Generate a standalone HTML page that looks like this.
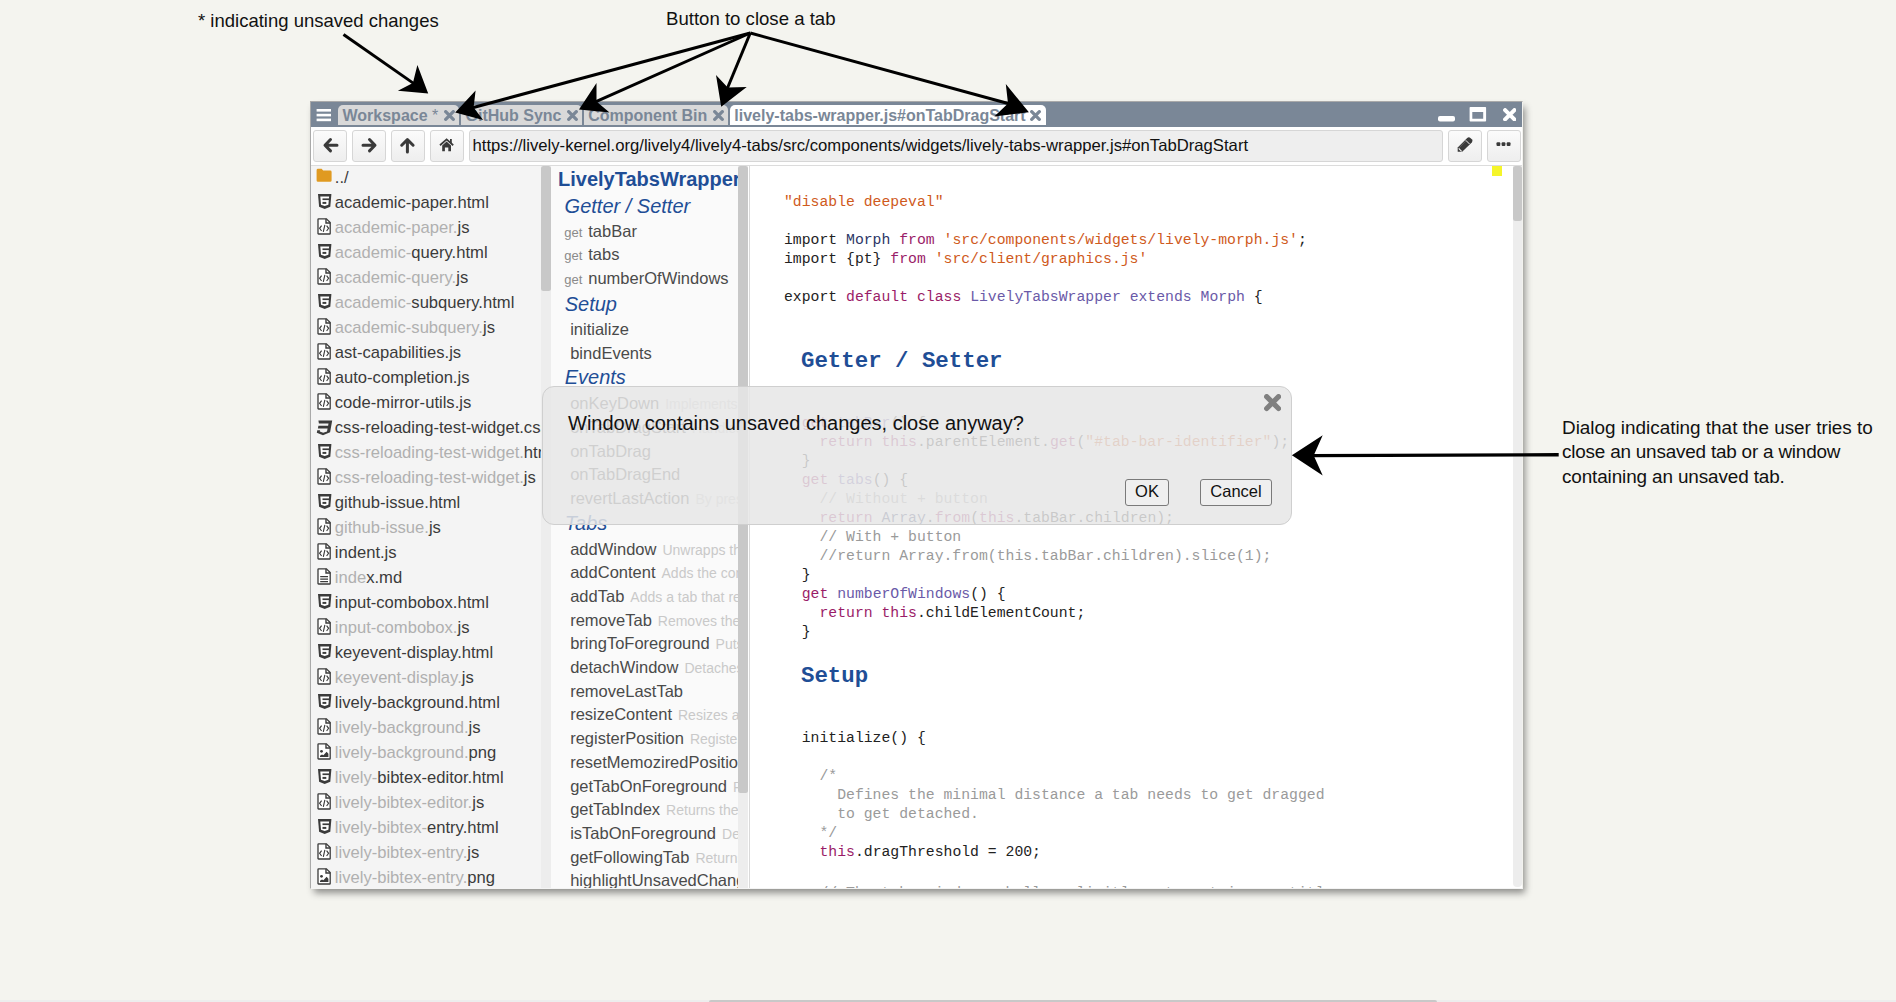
<!DOCTYPE html><html><head><meta charset="utf-8"><style>
*{box-sizing:border-box;margin:0;padding:0}
html,body{width:1896px;height:1002px;overflow:hidden;background:#f4f4ef;font-family:"Liberation Sans",sans-serif;position:relative}
.abs{position:absolute}
.ann{position:absolute;color:#111;font-size:18.6px;white-space:nowrap;line-height:24px}
#win{position:absolute;left:310px;top:101px;width:1213px;height:788px;background:#fff;border:1px solid #a9a9a9;border-right-color:#f2f2ee;border-bottom-color:#f4f4f4;box-shadow:3px 5px 7px -1px rgba(0,0,0,0.42)}
#title{position:absolute;left:311px;top:102px;width:1211px;height:25px;background:#7a8797}
.tab{position:absolute;top:104.7px;height:20.3px;background:#d9d9d9;border-radius:5px 5px 0 0;color:#7a8797;font-weight:bold;font-size:16px;white-space:nowrap;line-height:20px}
.tab.act{background:#fff}
.tab span{position:absolute;top:1px}
.btn{position:absolute;top:130px;width:33.6px;height:32px;border:1px solid #d6d6d6;border-radius:3px;background:linear-gradient(#fbfbfb,#eeeeee)}
#url{position:absolute;left:469px;top:130px;width:974px;height:31.6px;border:1px solid #d6d6d6;border-radius:3px;background:#eeeeee;font-size:16.68px;color:#111;line-height:30px;padding-left:2.5px;white-space:nowrap;overflow:hidden}
#sep{position:absolute;left:311px;top:165px;width:1211px;height:1px;background:#dcdcdc}
#files{position:absolute;left:311px;top:166px;width:230px;height:722px;background:#f4f4f4;overflow:hidden}
.frow{position:absolute;left:0;height:25px;white-space:nowrap;font-size:16.6px;color:#3b3b3b}
.frow .t{position:absolute;left:23.8px;top:0;line-height:25px}
.frow .g{color:#b0b0b0}
.frow svg{position:absolute;left:6px;top:3px}
.track{position:absolute;background:#ededed}
.thumb{position:absolute;background:#c8c8c8;border-radius:2.5px}
#outline{position:absolute;left:551px;top:166px;width:187px;height:722px;background:#fafafa;overflow:hidden}
.orow{position:absolute;white-space:nowrap;font-size:16.5px;color:#4a4a4a}
.orow .d{color:#c9c9c9;font-size:14px;margin-left:6px}
.hd{color:#1f4e96;font-style:italic;font-size:20px}
.get{color:#8a8a8a;font-size:13px;margin-right:6px}
#divider{position:absolute;left:747.5px;top:166px;width:2.5px;height:722px;background:#fff;border-right:1px solid #d9d9d9}
#code{position:absolute;left:750px;top:166px;width:763px;height:722px;background:#fff;overflow:hidden}
.cl{position:absolute;left:34px;white-space:pre;font-family:"Liberation Mono",monospace;font-size:14.78px;line-height:19px;color:#222}
.ch{position:absolute;left:51px;white-space:pre;font-family:"Liberation Mono",monospace;font-weight:bold;font-size:22.4px;line-height:30px;color:#1f4e96}
.s{color:#cf5a1c}.k{color:#9a1c68}.df{color:#6a5aa8}.c{color:#9a9a9a}.v2{color:#2b3566}
#dialog{position:absolute;left:542px;top:386px;width:750px;height:139px;border:1px solid #cfcfcf;border-radius:12px;background:rgba(230,230,230,0.85)}
#dialog .msg{position:absolute;left:25px;top:25px;font-size:20px;color:#111;white-space:nowrap}
.dbtn{position:absolute;top:91.5px;height:27.5px;border:1px solid #7a7a7a;border-radius:3px;background:#efefef;font-size:16.5px;color:#111;text-align:center;line-height:23px}
#hs{position:absolute;left:0;top:1000px;width:1896px;height:2px;background:#ededed}
#hs div{position:absolute;left:709px;top:0;width:728px;height:4px;background:#c8c8c8;border-radius:3px}
</style></head><body>
<div class="ann" style="left:198px;top:9px;font-size:18.5px">* indicating unsaved changes</div>
<div class="ann" style="left:666px;top:7px;font-size:18.6px">Button to close a tab</div>
<div class="ann" style="left:1562px;top:416px;font-size:18.9px;line-height:24.4px">Dialog indicating that the user tries to<br><span style="letter-spacing:-0.2px">close an unsaved tab or a window</span><br><span style="letter-spacing:-0.12px">containing an unsaved tab.</span></div>
<div id="win"></div>
<div id="title"></div>
<svg class="abs" style="left:316px;top:108px" width="16" height="14"><rect x="0.6" y="1" width="14.4" height="2.6" fill="#fff"/><rect x="0.6" y="5.8" width="14.4" height="2.6" fill="#fff"/><rect x="0.6" y="10.6" width="14.4" height="2.6" fill="#fff"/></svg>
<div class="tab" style="left:338px;width:121px"><span style="left:4.5px">Workspace <b style="font-weight:normal">*</b></span></div>
<svg class="abs" style="left:443.5px;top:110.2px" width="11" height="11" viewBox="0 0 10 10"><path d="M1.55 1.55L8.45 8.45M8.45 1.55L1.55 8.45" stroke="#7a8797" stroke-width="3.0" stroke-linecap="round"/></svg>
<div class="tab" style="left:461px;width:121px"><span style="left:4.5px">GitHub Sync</span></div>
<svg class="abs" style="left:566.5px;top:110.2px" width="11" height="11" viewBox="0 0 10 10"><path d="M1.55 1.55L8.45 8.45M8.45 1.55L1.55 8.45" stroke="#7a8797" stroke-width="3.0" stroke-linecap="round"/></svg>
<div class="tab" style="left:583.7px;width:144.5px"><span style="left:4.5px">Component Bin</span></div>
<svg class="abs" style="left:712.7px;top:110.2px" width="11" height="11" viewBox="0 0 10 10"><path d="M1.55 1.55L8.45 8.45M8.45 1.55L1.55 8.45" stroke="#7a8797" stroke-width="3.0" stroke-linecap="round"/></svg>
<div class="tab act" style="left:729.8px;width:315.79999999999995px"><span style="left:4.5px">lively-tabs-wrapper.js#onTabDragStart</span></div>
<svg class="abs" style="left:1030.1px;top:110.2px" width="11" height="11" viewBox="0 0 10 10"><path d="M1.55 1.55L8.45 8.45M8.45 1.55L1.55 8.45" stroke="#7a8797" stroke-width="3.0" stroke-linecap="round"/></svg>
<svg class="abs" style="left:1436px;top:104px" width="84" height="20"><rect x="2" y="12" width="17" height="5.4" rx="2" fill="#fff"/><path d="M34.4 3H49.3Q50.1 3 50.1 3.8V16.7Q50.1 17.5 49.3 17.5H34.4Q33.6 17.5 33.6 16.7V3.8Q33.6 3 34.4 3ZM36.3 8V14.8H47.2V8Z" fill="#fff" fill-rule="evenodd"/></svg>
<svg class="abs" style="left:1502.5px;top:107.5px" width="13.5" height="13.5" viewBox="0 0 10 10"><path d="M1.55 1.55L8.45 8.45M8.45 1.55L1.55 8.45" stroke="#fff" stroke-width="3.0" stroke-linecap="round"/></svg>
<div class="btn" style="left:313.4px"></div>
<div class="btn" style="left:352.4px"></div>
<div class="btn" style="left:391.2px"></div>
<div class="btn" style="left:430.3px"></div>
<svg class="abs" style="left:322px;top:137px" width="17" height="17"><path d="M8.5 2.5L3 8.2L8.5 13.9M3.5 8.2H15" stroke="#3a3a3a" stroke-width="3" fill="none" stroke-linecap="round" stroke-linejoin="round"/></svg>
<svg class="abs" style="left:361px;top:137px" width="17" height="17"><path d="M8.5 2.5L14 8.2L8.5 13.9M2 8.2H13.5" stroke="#3a3a3a" stroke-width="3" fill="none" stroke-linecap="round" stroke-linejoin="round"/></svg>
<svg class="abs" style="left:399px;top:137px" width="17" height="17"><path d="M2.7 8.2L8.4 2.6L14.1 8.2M8.4 3.2V15" stroke="#3a3a3a" stroke-width="3" fill="none" stroke-linecap="round" stroke-linejoin="round"/></svg>
<svg class="abs" style="left:439px;top:138px" width="17" height="15"><path d="M1 7.2L7.6 1.4L14.2 7.2" stroke="#3a3a3a" stroke-width="1.8" fill="none"/><path d="M3.2 7.4L7.6 3.6L12 7.4V13.2H9.3V9.6H5.9V13.2H3.2Z" fill="#3a3a3a"/><rect x="11" y="1" width="1.8" height="4" fill="#3a3a3a"/></svg>
<div id="url">https://lively-kernel.org/lively4/lively4-tabs/src/components/widgets/lively-tabs-wrapper.js#onTabDragStart</div>
<div class="btn" style="left:1448.3px"></div><div class="btn" style="left:1487.3px"></div>
<svg class="abs" style="left:1452px;top:132px" width="26" height="24"><path d="M5.7 19.8L5.7 15.6L15.2 5.9Q16.8 4.4 18.4 5.9L19.8 7.3Q21.3 8.9 19.8 10.4L10.2 19.8Z" fill="#3a3a3a"/><path d="M13.8 8.3L17.6 12.1" stroke="#f6f6f6" stroke-width="1"/><path d="M6.7 16.4L9.6 19.3" stroke="#f6f6f6" stroke-width="1.1"/><path d="M7.2 15.6L14.2 8.6" stroke="#8a8a8a" stroke-width="0.5"/></svg>
<svg class="abs" style="left:1496px;top:140px" width="16" height="10"><rect x="0.5" y="2.2" width="3.8" height="3.8" rx="1" fill="#3a3a3a"/><rect x="5.6" y="2.2" width="3.8" height="3.8" rx="1" fill="#3a3a3a"/><rect x="10.7" y="2.2" width="3.8" height="3.8" rx="1" fill="#3a3a3a"/></svg>
<div id="sep"></div>
<div id="files">
<div class="frow" style="top:-1.5px;width:230px"><svg width="17" height="15" style="left:5px;top:3.5px"><path d="M0.6 2.2Q0.6 0.8 2 0.8H5.6L7.2 2.6H14.2Q15.6 2.6 15.6 4V12.4Q15.6 13.8 14.2 13.8H2Q0.6 13.8 0.6 12.4Z" fill="#e09a21"/></svg><span class="t">../</span></div>
<div class="frow" style="top:23.5px;width:230px"><svg width="15" height="16" style="left:6.5px;top:4.9px"><path d="M0 0H13.4L12.3 12.7L6.7 14.9L1.1 12.7Z" fill="#3b3b3b"/><path d="M2.3 2.4H11.1L10.4 10.8L6.7 12L3 10.8Z" fill="#fff"/><path d="M4.5 4.4H11.4V6.1H4.5Z" fill="#3b3b3b"/><path d="M4.5 7.9H8.3V9.9H4.5Z" fill="#3b3b3b"/></svg><span class="t">academic-paper.html</span></div>
<div class="frow" style="top:48.5px;width:230px"><svg width="15" height="18" style="left:6px;top:3.3px"><path d="M1 1.4Q1 0.8 1.6 0.8H9.4L13.2 4.6V15.4Q13.2 16 12.6 16H1.6Q1 16 1 15.4Z" fill="#fff" stroke="#3b3b3b" stroke-width="1.3"/><path d="M9 0.8V5H13.2" fill="none" stroke="#3b3b3b" stroke-width="1.4"/><path d="M4.6 7.6L2.6 10.3L4.6 13M9.6 7.6L11.6 10.3L9.6 13M7.9 6.8L6.3 13.8" stroke="#3b3b3b" stroke-width="1.15" fill="none"/></svg><span class="t"><span class="g">academic-paper.</span>js</span></div>
<div class="frow" style="top:73.5px;width:230px"><svg width="15" height="16" style="left:6.5px;top:4.9px"><path d="M0 0H13.4L12.3 12.7L6.7 14.9L1.1 12.7Z" fill="#3b3b3b"/><path d="M2.3 2.4H11.1L10.4 10.8L6.7 12L3 10.8Z" fill="#fff"/><path d="M4.5 4.4H11.4V6.1H4.5Z" fill="#3b3b3b"/><path d="M4.5 7.9H8.3V9.9H4.5Z" fill="#3b3b3b"/></svg><span class="t"><span class="g">academic-</span>query.html</span></div>
<div class="frow" style="top:98.5px;width:230px"><svg width="15" height="18" style="left:6px;top:3.3px"><path d="M1 1.4Q1 0.8 1.6 0.8H9.4L13.2 4.6V15.4Q13.2 16 12.6 16H1.6Q1 16 1 15.4Z" fill="#fff" stroke="#3b3b3b" stroke-width="1.3"/><path d="M9 0.8V5H13.2" fill="none" stroke="#3b3b3b" stroke-width="1.4"/><path d="M4.6 7.6L2.6 10.3L4.6 13M9.6 7.6L11.6 10.3L9.6 13M7.9 6.8L6.3 13.8" stroke="#3b3b3b" stroke-width="1.15" fill="none"/></svg><span class="t"><span class="g">academic-query.</span>js</span></div>
<div class="frow" style="top:123.5px;width:230px"><svg width="15" height="16" style="left:6.5px;top:4.9px"><path d="M0 0H13.4L12.3 12.7L6.7 14.9L1.1 12.7Z" fill="#3b3b3b"/><path d="M2.3 2.4H11.1L10.4 10.8L6.7 12L3 10.8Z" fill="#fff"/><path d="M4.5 4.4H11.4V6.1H4.5Z" fill="#3b3b3b"/><path d="M4.5 7.9H8.3V9.9H4.5Z" fill="#3b3b3b"/></svg><span class="t"><span class="g">academic-</span>subquery.html</span></div>
<div class="frow" style="top:148.5px;width:230px"><svg width="15" height="18" style="left:6px;top:3.3px"><path d="M1 1.4Q1 0.8 1.6 0.8H9.4L13.2 4.6V15.4Q13.2 16 12.6 16H1.6Q1 16 1 15.4Z" fill="#fff" stroke="#3b3b3b" stroke-width="1.3"/><path d="M9 0.8V5H13.2" fill="none" stroke="#3b3b3b" stroke-width="1.4"/><path d="M4.6 7.6L2.6 10.3L4.6 13M9.6 7.6L11.6 10.3L9.6 13M7.9 6.8L6.3 13.8" stroke="#3b3b3b" stroke-width="1.15" fill="none"/></svg><span class="t"><span class="g">academic-subquery.</span>js</span></div>
<div class="frow" style="top:173.5px;width:230px"><svg width="15" height="18" style="left:6px;top:3.3px"><path d="M1 1.4Q1 0.8 1.6 0.8H9.4L13.2 4.6V15.4Q13.2 16 12.6 16H1.6Q1 16 1 15.4Z" fill="#fff" stroke="#3b3b3b" stroke-width="1.3"/><path d="M9 0.8V5H13.2" fill="none" stroke="#3b3b3b" stroke-width="1.4"/><path d="M4.6 7.6L2.6 10.3L4.6 13M9.6 7.6L11.6 10.3L9.6 13M7.9 6.8L6.3 13.8" stroke="#3b3b3b" stroke-width="1.15" fill="none"/></svg><span class="t">ast-capabilities.js</span></div>
<div class="frow" style="top:198.5px;width:230px"><svg width="15" height="18" style="left:6px;top:3.3px"><path d="M1 1.4Q1 0.8 1.6 0.8H9.4L13.2 4.6V15.4Q13.2 16 12.6 16H1.6Q1 16 1 15.4Z" fill="#fff" stroke="#3b3b3b" stroke-width="1.3"/><path d="M9 0.8V5H13.2" fill="none" stroke="#3b3b3b" stroke-width="1.4"/><path d="M4.6 7.6L2.6 10.3L4.6 13M9.6 7.6L11.6 10.3L9.6 13M7.9 6.8L6.3 13.8" stroke="#3b3b3b" stroke-width="1.15" fill="none"/></svg><span class="t">auto-completion.js</span></div>
<div class="frow" style="top:223.5px;width:230px"><svg width="15" height="18" style="left:6px;top:3.3px"><path d="M1 1.4Q1 0.8 1.6 0.8H9.4L13.2 4.6V15.4Q13.2 16 12.6 16H1.6Q1 16 1 15.4Z" fill="#fff" stroke="#3b3b3b" stroke-width="1.3"/><path d="M9 0.8V5H13.2" fill="none" stroke="#3b3b3b" stroke-width="1.4"/><path d="M4.6 7.6L2.6 10.3L4.6 13M9.6 7.6L11.6 10.3L9.6 13M7.9 6.8L6.3 13.8" stroke="#3b3b3b" stroke-width="1.15" fill="none"/></svg><span class="t">code-mirror-utils.js</span></div>
<div class="frow" style="top:248.5px;width:230px"><svg width="18" height="17" style="left:4.6px;top:5.2px"><path d="M2.4 0.4H16.2L14.1 12.2L7 15.2L0.8 12.8L1.3 10.2H4.1L3.8 11.4L7.2 12.7L11 11.4L11.6 8.5H1.9L2.4 5.7H12.1L12.5 3.4H2.9Z" fill="#3b3b3b"/></svg><span class="t">css-reloading-test-widget.css</span></div>
<div class="frow" style="top:273.5px;width:230px"><svg width="15" height="16" style="left:6.5px;top:4.9px"><path d="M0 0H13.4L12.3 12.7L6.7 14.9L1.1 12.7Z" fill="#3b3b3b"/><path d="M2.3 2.4H11.1L10.4 10.8L6.7 12L3 10.8Z" fill="#fff"/><path d="M4.5 4.4H11.4V6.1H4.5Z" fill="#3b3b3b"/><path d="M4.5 7.9H8.3V9.9H4.5Z" fill="#3b3b3b"/></svg><span class="t"><span class="g">css-reloading-test-widget.</span>html</span></div>
<div class="frow" style="top:298.5px;width:230px"><svg width="15" height="18" style="left:6px;top:3.3px"><path d="M1 1.4Q1 0.8 1.6 0.8H9.4L13.2 4.6V15.4Q13.2 16 12.6 16H1.6Q1 16 1 15.4Z" fill="#fff" stroke="#3b3b3b" stroke-width="1.3"/><path d="M9 0.8V5H13.2" fill="none" stroke="#3b3b3b" stroke-width="1.4"/><path d="M4.6 7.6L2.6 10.3L4.6 13M9.6 7.6L11.6 10.3L9.6 13M7.9 6.8L6.3 13.8" stroke="#3b3b3b" stroke-width="1.15" fill="none"/></svg><span class="t"><span class="g">css-reloading-test-widget.</span>js</span></div>
<div class="frow" style="top:323.5px;width:230px"><svg width="15" height="16" style="left:6.5px;top:4.9px"><path d="M0 0H13.4L12.3 12.7L6.7 14.9L1.1 12.7Z" fill="#3b3b3b"/><path d="M2.3 2.4H11.1L10.4 10.8L6.7 12L3 10.8Z" fill="#fff"/><path d="M4.5 4.4H11.4V6.1H4.5Z" fill="#3b3b3b"/><path d="M4.5 7.9H8.3V9.9H4.5Z" fill="#3b3b3b"/></svg><span class="t">github-issue.html</span></div>
<div class="frow" style="top:348.5px;width:230px"><svg width="15" height="18" style="left:6px;top:3.3px"><path d="M1 1.4Q1 0.8 1.6 0.8H9.4L13.2 4.6V15.4Q13.2 16 12.6 16H1.6Q1 16 1 15.4Z" fill="#fff" stroke="#3b3b3b" stroke-width="1.3"/><path d="M9 0.8V5H13.2" fill="none" stroke="#3b3b3b" stroke-width="1.4"/><path d="M4.6 7.6L2.6 10.3L4.6 13M9.6 7.6L11.6 10.3L9.6 13M7.9 6.8L6.3 13.8" stroke="#3b3b3b" stroke-width="1.15" fill="none"/></svg><span class="t"><span class="g">github-issue.</span>js</span></div>
<div class="frow" style="top:373.5px;width:230px"><svg width="15" height="18" style="left:6px;top:3.3px"><path d="M1 1.4Q1 0.8 1.6 0.8H9.4L13.2 4.6V15.4Q13.2 16 12.6 16H1.6Q1 16 1 15.4Z" fill="#fff" stroke="#3b3b3b" stroke-width="1.3"/><path d="M9 0.8V5H13.2" fill="none" stroke="#3b3b3b" stroke-width="1.4"/><path d="M4.6 7.6L2.6 10.3L4.6 13M9.6 7.6L11.6 10.3L9.6 13M7.9 6.8L6.3 13.8" stroke="#3b3b3b" stroke-width="1.15" fill="none"/></svg><span class="t">indent.js</span></div>
<div class="frow" style="top:398.5px;width:230px"><svg width="15" height="18" style="left:6px;top:3.3px"><path d="M1 1.4Q1 0.8 1.6 0.8H9.4L13.2 4.6V15.4Q13.2 16 12.6 16H1.6Q1 16 1 15.4Z" fill="#fff" stroke="#3b3b3b" stroke-width="1.3"/><path d="M9 0.8V5H13.2" fill="none" stroke="#3b3b3b" stroke-width="1.4"/><path d="M3.2 8.6H11M3.2 11.1H11M3.2 13.6H11" stroke="#3b3b3b" stroke-width="1.2"/></svg><span class="t"><span class="g">inde</span>x.md</span></div>
<div class="frow" style="top:423.5px;width:230px"><svg width="15" height="16" style="left:6.5px;top:4.9px"><path d="M0 0H13.4L12.3 12.7L6.7 14.9L1.1 12.7Z" fill="#3b3b3b"/><path d="M2.3 2.4H11.1L10.4 10.8L6.7 12L3 10.8Z" fill="#fff"/><path d="M4.5 4.4H11.4V6.1H4.5Z" fill="#3b3b3b"/><path d="M4.5 7.9H8.3V9.9H4.5Z" fill="#3b3b3b"/></svg><span class="t">input-combobox.html</span></div>
<div class="frow" style="top:448.5px;width:230px"><svg width="15" height="18" style="left:6px;top:3.3px"><path d="M1 1.4Q1 0.8 1.6 0.8H9.4L13.2 4.6V15.4Q13.2 16 12.6 16H1.6Q1 16 1 15.4Z" fill="#fff" stroke="#3b3b3b" stroke-width="1.3"/><path d="M9 0.8V5H13.2" fill="none" stroke="#3b3b3b" stroke-width="1.4"/><path d="M4.6 7.6L2.6 10.3L4.6 13M9.6 7.6L11.6 10.3L9.6 13M7.9 6.8L6.3 13.8" stroke="#3b3b3b" stroke-width="1.15" fill="none"/></svg><span class="t"><span class="g">input-combobox.</span>js</span></div>
<div class="frow" style="top:473.5px;width:230px"><svg width="15" height="16" style="left:6.5px;top:4.9px"><path d="M0 0H13.4L12.3 12.7L6.7 14.9L1.1 12.7Z" fill="#3b3b3b"/><path d="M2.3 2.4H11.1L10.4 10.8L6.7 12L3 10.8Z" fill="#fff"/><path d="M4.5 4.4H11.4V6.1H4.5Z" fill="#3b3b3b"/><path d="M4.5 7.9H8.3V9.9H4.5Z" fill="#3b3b3b"/></svg><span class="t">keyevent-display.html</span></div>
<div class="frow" style="top:498.5px;width:230px"><svg width="15" height="18" style="left:6px;top:3.3px"><path d="M1 1.4Q1 0.8 1.6 0.8H9.4L13.2 4.6V15.4Q13.2 16 12.6 16H1.6Q1 16 1 15.4Z" fill="#fff" stroke="#3b3b3b" stroke-width="1.3"/><path d="M9 0.8V5H13.2" fill="none" stroke="#3b3b3b" stroke-width="1.4"/><path d="M4.6 7.6L2.6 10.3L4.6 13M9.6 7.6L11.6 10.3L9.6 13M7.9 6.8L6.3 13.8" stroke="#3b3b3b" stroke-width="1.15" fill="none"/></svg><span class="t"><span class="g">keyevent-display.</span>js</span></div>
<div class="frow" style="top:523.5px;width:230px"><svg width="15" height="16" style="left:6.5px;top:4.9px"><path d="M0 0H13.4L12.3 12.7L6.7 14.9L1.1 12.7Z" fill="#3b3b3b"/><path d="M2.3 2.4H11.1L10.4 10.8L6.7 12L3 10.8Z" fill="#fff"/><path d="M4.5 4.4H11.4V6.1H4.5Z" fill="#3b3b3b"/><path d="M4.5 7.9H8.3V9.9H4.5Z" fill="#3b3b3b"/></svg><span class="t">lively-background.html</span></div>
<div class="frow" style="top:548.5px;width:230px"><svg width="15" height="18" style="left:6px;top:3.3px"><path d="M1 1.4Q1 0.8 1.6 0.8H9.4L13.2 4.6V15.4Q13.2 16 12.6 16H1.6Q1 16 1 15.4Z" fill="#fff" stroke="#3b3b3b" stroke-width="1.3"/><path d="M9 0.8V5H13.2" fill="none" stroke="#3b3b3b" stroke-width="1.4"/><path d="M4.6 7.6L2.6 10.3L4.6 13M9.6 7.6L11.6 10.3L9.6 13M7.9 6.8L6.3 13.8" stroke="#3b3b3b" stroke-width="1.15" fill="none"/></svg><span class="t"><span class="g">lively-background.</span>js</span></div>
<div class="frow" style="top:573.5px;width:230px"><svg width="15" height="18" style="left:6px;top:3.3px"><path d="M1 1.4Q1 0.8 1.6 0.8H9.4L13.2 4.6V15.4Q13.2 16 12.6 16H1.6Q1 16 1 15.4Z" fill="#fff" stroke="#3b3b3b" stroke-width="1.3"/><path d="M9 0.8V5H13.2" fill="none" stroke="#3b3b3b" stroke-width="1.4"/><circle cx="4.5" cy="8.3" r="1.4" fill="#3b3b3b"/><path d="M3 14V12.8L5 11.4L6.4 12.3L9.6 8.8L11.4 10.8V14Z" fill="#3b3b3b"/></svg><span class="t"><span class="g">lively-background.</span>png</span></div>
<div class="frow" style="top:598.5px;width:230px"><svg width="15" height="16" style="left:6.5px;top:4.9px"><path d="M0 0H13.4L12.3 12.7L6.7 14.9L1.1 12.7Z" fill="#3b3b3b"/><path d="M2.3 2.4H11.1L10.4 10.8L6.7 12L3 10.8Z" fill="#fff"/><path d="M4.5 4.4H11.4V6.1H4.5Z" fill="#3b3b3b"/><path d="M4.5 7.9H8.3V9.9H4.5Z" fill="#3b3b3b"/></svg><span class="t"><span class="g">lively-</span>bibtex-editor.html</span></div>
<div class="frow" style="top:623.5px;width:230px"><svg width="15" height="18" style="left:6px;top:3.3px"><path d="M1 1.4Q1 0.8 1.6 0.8H9.4L13.2 4.6V15.4Q13.2 16 12.6 16H1.6Q1 16 1 15.4Z" fill="#fff" stroke="#3b3b3b" stroke-width="1.3"/><path d="M9 0.8V5H13.2" fill="none" stroke="#3b3b3b" stroke-width="1.4"/><path d="M4.6 7.6L2.6 10.3L4.6 13M9.6 7.6L11.6 10.3L9.6 13M7.9 6.8L6.3 13.8" stroke="#3b3b3b" stroke-width="1.15" fill="none"/></svg><span class="t"><span class="g">lively-bibtex-editor.</span>js</span></div>
<div class="frow" style="top:648.5px;width:230px"><svg width="15" height="16" style="left:6.5px;top:4.9px"><path d="M0 0H13.4L12.3 12.7L6.7 14.9L1.1 12.7Z" fill="#3b3b3b"/><path d="M2.3 2.4H11.1L10.4 10.8L6.7 12L3 10.8Z" fill="#fff"/><path d="M4.5 4.4H11.4V6.1H4.5Z" fill="#3b3b3b"/><path d="M4.5 7.9H8.3V9.9H4.5Z" fill="#3b3b3b"/></svg><span class="t"><span class="g">lively-bibtex-</span>entry.html</span></div>
<div class="frow" style="top:673.5px;width:230px"><svg width="15" height="18" style="left:6px;top:3.3px"><path d="M1 1.4Q1 0.8 1.6 0.8H9.4L13.2 4.6V15.4Q13.2 16 12.6 16H1.6Q1 16 1 15.4Z" fill="#fff" stroke="#3b3b3b" stroke-width="1.3"/><path d="M9 0.8V5H13.2" fill="none" stroke="#3b3b3b" stroke-width="1.4"/><path d="M4.6 7.6L2.6 10.3L4.6 13M9.6 7.6L11.6 10.3L9.6 13M7.9 6.8L6.3 13.8" stroke="#3b3b3b" stroke-width="1.15" fill="none"/></svg><span class="t"><span class="g">lively-bibtex-entry.</span>js</span></div>
<div class="frow" style="top:698.5px;width:230px"><svg width="15" height="18" style="left:6px;top:3.3px"><path d="M1 1.4Q1 0.8 1.6 0.8H9.4L13.2 4.6V15.4Q13.2 16 12.6 16H1.6Q1 16 1 15.4Z" fill="#fff" stroke="#3b3b3b" stroke-width="1.3"/><path d="M9 0.8V5H13.2" fill="none" stroke="#3b3b3b" stroke-width="1.4"/><circle cx="4.5" cy="8.3" r="1.4" fill="#3b3b3b"/><path d="M3 14V12.8L5 11.4L6.4 12.3L9.6 8.8L11.4 10.8V14Z" fill="#3b3b3b"/></svg><span class="t"><span class="g">lively-bibtex-entry.</span>png</span></div>
</div>
<div class="track" style="left:541px;top:166px;width:10px;height:722px"></div>
<div class="thumb" style="left:541.3px;top:166.3px;width:9.5px;height:125px"></div>
<div id="outline">
<div class="orow" style="left:7px;top:1.7px;font-size:20px;font-weight:bold;color:#1f4e96;line-height:1.15">LivelyTabsWrapper</div>
<div class="orow hd" style="left:13.6px;top:29.1px;line-height:1.15">Getter / Setter</div>
<div class="orow" style="left:13.2px;top:55.6px;line-height:1.15"><span class="get">get</span>tabBar</div>
<div class="orow" style="left:13.2px;top:79.3px;line-height:1.15"><span class="get">get</span>tabs</div>
<div class="orow" style="left:13.2px;top:102.9px;line-height:1.15"><span class="get">get</span>numberOfWindows</div>
<div class="orow hd" style="left:13.7px;top:126.9px;line-height:1.15">Setup</div>
<div class="orow" style="left:19.2px;top:153.9px;line-height:1.15">initialize</div>
<div class="orow" style="left:19.2px;top:177.6px;line-height:1.15">bindEvents</div>
<div class="orow hd" style="left:13.7px;top:200.0px;line-height:1.15">Events</div>
<div class="orow" style="left:19.2px;top:227.8px;line-height:1.15">onKeyDown<span class="d">Implements</span></div>
<div class="orow" style="left:19.2px;top:251.6px;line-height:1.15">onTabDragStart<span class="d">Handles</span></div>
<div class="orow" style="left:19.2px;top:275.5px;line-height:1.15">onTabDrag</div>
<div class="orow" style="left:19.2px;top:299.3px;line-height:1.15">onTabDragEnd</div>
<div class="orow" style="left:19.2px;top:323.1px;line-height:1.15">revertLastAction<span class="d">By pressing</span></div>
<div class="orow hd" style="left:13.7px;top:346.1px;line-height:1.15">Tabs</div>
<div class="orow" style="left:19.2px;top:373.5px;line-height:1.15">addWindow<span class="d">Unwrapps the</span></div>
<div class="orow" style="left:19.2px;top:397.2px;line-height:1.15">addContent<span class="d">Adds the content</span></div>
<div class="orow" style="left:19.2px;top:420.9px;line-height:1.15">addTab<span class="d">Adds a tab that refers</span></div>
<div class="orow" style="left:19.2px;top:444.6px;line-height:1.15">removeTab<span class="d">Removes the</span></div>
<div class="orow" style="left:19.2px;top:468.3px;line-height:1.15">bringToForeground<span class="d">Puts</span></div>
<div class="orow" style="left:19.2px;top:492.0px;line-height:1.15">detachWindow<span class="d">Detaches</span></div>
<div class="orow" style="left:19.2px;top:515.7px;line-height:1.15">removeLastTab</div>
<div class="orow" style="left:19.2px;top:539.4px;line-height:1.15">resizeContent<span class="d">Resizes a</span></div>
<div class="orow" style="left:19.2px;top:563.1px;line-height:1.15">registerPosition<span class="d">Registers</span></div>
<div class="orow" style="left:19.2px;top:586.8px;line-height:1.15">resetMemoziredPosition</div>
<div class="orow" style="left:19.2px;top:610.5px;line-height:1.15">getTabOnForeground<span class="d">Returns</span></div>
<div class="orow" style="left:19.2px;top:634.2px;line-height:1.15">getTabIndex<span class="d">Returns the</span></div>
<div class="orow" style="left:19.2px;top:657.9px;line-height:1.15">isTabOnForeground<span class="d">Decides</span></div>
<div class="orow" style="left:19.2px;top:681.6px;line-height:1.15">getFollowingTab<span class="d">Returns</span></div>
<div class="orow" style="left:19.2px;top:705.3px;line-height:1.15">highlightUnsavedChanges</div>
</div>
<div class="track" style="left:738px;top:166px;width:10px;height:722px"></div>
<div class="thumb" style="left:738.3px;top:166.3px;width:9.4px;height:627px"></div>
<div id="divider"></div>
<div id="code">
<div class="cl" style="top:26.9px"><span class="s">"disable deepeval"</span></div>
<div class="cl" style="top:64.9px">import <span class="v2">Morph</span> <span class="k">from</span> <span class="s">'src/components/widgets/lively-morph.js'</span>;</div>
<div class="cl" style="top:83.9px">import {pt} <span class="k">from</span> <span class="s">'src/client/graphics.js'</span></div>
<div class="cl" style="top:121.9px">export <span class="k">default</span> <span class="k">class</span> <span class="df">LivelyTabsWrapper</span> <span class="df">extends</span> <span class="df">Morph</span> {</div>
<div class="cl" style="top:247.9px">  <span class="k">get</span> <span class="df">tabBar</span>() {</div>
<div class="cl" style="top:266.9px">    <span class="k">return</span> <span class="k">this</span>.parentElement.<span class="k">get</span>(<span class="s">"#tab-bar-identifier"</span>);</div>
<div class="cl" style="top:285.9px">  }</div>
<div class="cl" style="top:304.9px">  <span class="k">get</span> <span class="df">tabs</span>() {</div>
<div class="cl" style="top:323.9px">    <span class="c">// Without + button</span></div>
<div class="cl" style="top:342.9px">    <span class="k">return</span> <span class="v2">Array</span>.<span class="k">from</span>(<span class="k">this</span>.tabBar.children);</div>
<div class="cl" style="top:361.9px">    <span class="c">// With + button</span></div>
<div class="cl" style="top:380.9px">    <span class="c">//return Array.from(this.tabBar.children).slice(1);</span></div>
<div class="cl" style="top:399.9px">  }</div>
<div class="cl" style="top:418.9px">  <span class="k">get</span> <span class="df">numberOfWindows</span>() {</div>
<div class="cl" style="top:437.9px">    <span class="k">return</span> <span class="k">this</span>.childElementCount;</div>
<div class="cl" style="top:456.9px">  }</div>
<div class="cl" style="top:562.9px">  initialize() {</div>
<div class="cl" style="top:600.9px">    <span class="c">/*</span></div>
<div class="cl" style="top:619.9px">      <span class="c">Defines the minimal distance a tab needs to get dragged</span></div>
<div class="cl" style="top:638.9px">      <span class="c">to get detached.</span></div>
<div class="cl" style="top:657.9px">    <span class="c">*/</span></div>
<div class="cl" style="top:676.9px">    <span class="k">this</span>.dragThreshold = 200;</div>
<div class="cl" style="top:717.5px">    <span class="c">// The tab wairds an bellowerlimitless to a trim on atitle</span></div>
<div class="ch" style="top:180px">Getter / Setter</div>
<div class="ch" style="top:495px">Setup</div>
<div class="abs" style="left:742px;top:0;width:10px;height:10px;background:#f5f52a"></div>
</div>
<div class="track" style="left:1513px;top:166px;width:9px;height:721px;border-radius:0 0 4px 4px"></div>
<div class="thumb" style="left:1513.4px;top:166.3px;width:8.6px;height:55px"></div>
<div id="dialog"><div class="msg">Window contains unsaved changes, close anyway?</div><div class="dbtn" style="left:582px;width:44px">OK</div><div class="dbtn" style="left:657.2px;width:71.7px">Cancel</div></div>
<svg class="abs" style="left:1264px;top:394.4px" width="17.2" height="17.2" viewBox="0 0 10 10"><path d="M1.55 1.55L8.45 8.45M8.45 1.55L1.55 8.45" stroke="#808080" stroke-width="3.0" stroke-linecap="round"/></svg>
<svg class="abs" style="left:0;top:0" width="1896" height="1002">
<line x1="343.5" y1="34.5" x2="415.36" y2="84.62" stroke="#000" stroke-width="3.0"/><path d="M428.2 93.6L417.4 65.1L412.9 82.9L397.9 90.7Z" fill="#000"/>
<line x1="750.3" y1="33" x2="470.70" y2="108.18" stroke="#000" stroke-width="3.0"/><path d="M455.2 112.6L475.6 90.6L473.6 107.4L483.1 120.1Z" fill="#000"/>
<line x1="750.3" y1="33" x2="593.76" y2="102.72" stroke="#000" stroke-width="3.0"/><path d="M579 109.4L596.5 83.1L596.5 101.5L609.5 112.5Z" fill="#000"/>
<line x1="750.3" y1="33" x2="726.55" y2="90.27" stroke="#000" stroke-width="3.0"/><path d="M721.2 106.7L716 75L727.7 87.5L746.7 87Z" fill="#000"/>
<line x1="750.3" y1="33" x2="1010.89" y2="104.29" stroke="#000" stroke-width="3.0"/><path d="M1028.9 112.3L1005.8 84L1008 103.5L994.3 116.4Z" fill="#000"/>
<line x1="1558.7" y1="454.8" x2="1310.70" y2="455.61" stroke="#000" stroke-width="3.4"/><path d="M1291.9 455.2L1322.7 435.2L1313.7 455.6L1322.7 475.6Z" fill="#000"/>
</svg>
<div id="hs"><div></div></div>
</body></html>
